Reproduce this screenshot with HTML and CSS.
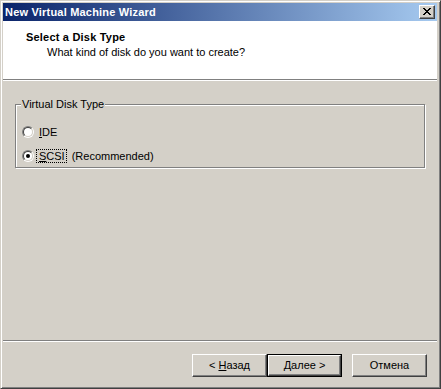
FILE: index.html
```html
<!DOCTYPE html>
<html>
<head>
<meta charset="utf-8">
<link rel="stylesheet" href="styles.css">
</head>
<body>
<div class="window">
  <div class="titlebar">
    <span class="title">New Virtual Machine Wizard</span>
    <span class="close"><svg width="8" height="7" viewBox="0 0 8 7"><path d="M0 0h2v1h1v1h2v-1h1v-1h2v1h-1v1h-1v1h-1v1h1v1h1v1h1v1h-2v-1h-1v-1h-2v1h-1v1h-2v-1h1v-1h1v-1h1v-1h-1v-1h-1v-1h-1z" fill="#000"/></svg></span>
  </div>
  <div class="header">
    <div class="h-title">Select a Disk Type</div>
    <div class="h-sub">What kind of disk do you want to create?</div>
  </div>
  <div class="body">
    <div class="group">
      <span class="legend">Virtual Disk Type</span>
      <div class="row">
        <span class="radio"><span class="radio-in"></span></span>
        <span class="label"><u>I</u>DE</span>
      </div>
      <div class="row">
        <span class="radio"><span class="radio-in"><span class="dot"></span></span></span>
        <span class="label focus"><u>S</u>CSI</span>
        <span class="note">(Recommended)</span>
      </div>
    </div>
  </div>
  <div class="footer">
    <span class="btn">&lt;&nbsp;<u>Н</u>азад</span>
    <span class="btn default"><span class="btn-inner"><u>Д</u>алее&nbsp;&gt;</span></span>
    <span class="btn cancel">Отмена</span>
  </div>
</div>
</body>
</html>
```
FILE: styles.css
```css
html, body {
  margin: 0;
  padding: 0;
  background: #d4d0c8;
}
.window {
  width: 441px;
  height: 389px;
  box-sizing: border-box;
  border: 1px solid;
  border-color: #d4d0c8 #404040 #404040 #d4d0c8;
  box-shadow: inset 1px 1px 0 #fff, inset -1px -1px 0 #808080;
  padding: 2px 3px 2px 2px;
  display: flex;
  flex-direction: column;
  font-family: "Liberation Sans", Arial, sans-serif;
  font-size: 11px;
  line-height: 13px;
  color: #000;
  background: #d4d0c8;
}
.titlebar {
  height: 18px;
  flex: none;
  background: linear-gradient(to right, #0a246a, #a6caf0);
  display: flex;
  align-items: center;
  justify-content: space-between;
  padding: 0 2px 0 2px;
}
.title {
  color: #fff;
  font-weight: bold;
  font-size: 11px;
  letter-spacing: 0.2px;
}
.close {
  width: 16px;
  height: 14px;
  box-sizing: border-box;
  background: #d4d0c8;
  border: 1px solid;
  border-color: #fff #404040 #404040 #fff;
  box-shadow: inset -1px -1px 0 #808080;
  display: flex;
  align-items: center;
  justify-content: center;
  padding: 0 1px 1px 0;
}
.close svg { display: block; }
.header {
  flex: none;
  height: 59px;
  box-sizing: border-box;
  background: #fff;
  border-bottom: 1px solid #808080;
  padding: 10px 0 0 23px;
}
.h-title {
  font-weight: bold;
  letter-spacing: 0.2px;
}
.h-sub {
  margin-top: 2px;
  padding-left: 21px;
}
.body {
  flex: 1;
  border-top: 1px solid #fff;
  border-bottom: 1px solid #808080;
  padding: 23px 0 0 12px;
}
.group {
  width: 410px;
  height: 64px;
  box-sizing: border-box;
  border: 1px solid #808080;
  box-shadow: 1px 1px 0 #fff, inset 1px 1px 0 #fff;
  padding: 0 0 0 6px;
}
.legend {
  display: inline-block;
  margin-top: -7px;
  margin-left: -1px;
  padding: 0 1px;
  background: #d4d0c8;
  vertical-align: top;
}
.row {
  display: flex;
  align-items: center;
  height: 16px;
  margin-top: 6px;
}
.row + .row { margin-top: 8px; }
.radio {
  width: 12px;
  height: 12px;
  box-sizing: border-box;
  border-radius: 50%;
  border: 1px solid;
  border-color: #808080 #fff #fff #808080;
  flex: none;
  display: flex;
}
.radio-in {
  flex: 1;
  border-radius: 50%;
  border: 1px solid;
  border-color: #404040 #d4d0c8 #d4d0c8 #404040;
  background: #fff;
  display: flex;
  align-items: center;
  justify-content: center;
}
.dot {
  width: 4px;
  height: 4px;
  border-radius: 50%;
  background: #000;
}
.label {
  margin-left: 5px;
}
.focus {
  margin-left: 3px;
  padding: 0 1px 0 2px;
  outline: 1px dotted #000;
  line-height: 12px;
}
.note {
  margin-left: 6px;
}
.footer {
  flex: none;
  height: 45px;
  box-sizing: border-box;
  border-top: 1px solid #fff;
  display: flex;
  justify-content: flex-end;
  align-items: flex-start;
  padding: 12px 10px 0 0;
}
.btn {
  width: 75px;
  height: 23px;
  box-sizing: border-box;
  border: 1px solid;
  border-color: #fff #404040 #404040 #fff;
  box-shadow: inset -1px -1px 0 #808080;
  display: flex;
  align-items: center;
  justify-content: center;
  padding-bottom: 1px;
}
.btn.default {
  border: 1px solid #000;
  box-shadow: none;
  padding: 0;
}
.btn-inner {
  width: 100%;
  height: 100%;
  box-sizing: border-box;
  border: 1px solid;
  border-color: #fff #404040 #404040 #fff;
  box-shadow: inset -1px -1px 0 #808080;
  display: flex;
  align-items: center;
  justify-content: center;
  padding-bottom: 1px;
}
.btn.cancel {
  margin-left: 10px;
}
```
